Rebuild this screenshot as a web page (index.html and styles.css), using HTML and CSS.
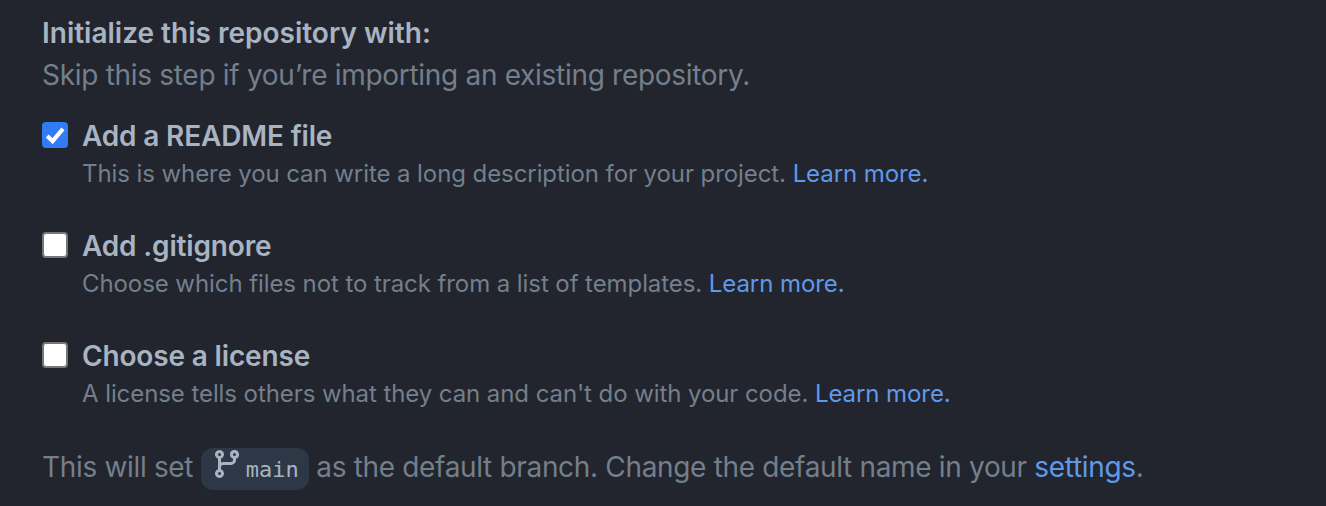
FILE: index.html
```html
<!DOCTYPE html>
<html lang="en">
<head>
<meta charset="utf-8">
<title>Initialize repository</title>
<link rel="stylesheet" href="styles.css">
</head>
<body>
<main class="panel">
  <h2 class="title">Initialize this repository with:</h2>
  <p class="hint">Skip this step if you’re importing an existing repository.</p>
  <div class="options">
    <div class="option">
      <span class="box checked">
        <svg viewBox="0 0 16 16" class="tick" aria-hidden="true"><path d="M3.2 8.6 6.5 11.8 12.9 4.2" fill="none" stroke="#fff" stroke-width="2.5"/></svg>
      </span>
      <div class="option-body">
        <div class="label">Add a README file</div>
        <div class="note">This is where you can write a long description for your project. <a href="#">Learn more.</a></div>
      </div>
    </div>
    <div class="option">
      <span class="box"></span>
      <div class="option-body">
        <div class="label">Add .gitignore</div>
        <div class="note">Choose which files not to track from a list of templates. <a href="#">Learn more.</a></div>
      </div>
    </div>
    <div class="option">
      <span class="box"></span>
      <div class="option-body">
        <div class="label">Choose a license</div>
        <div class="note">A license tells others what they can and can't do with your code. <a href="#">Learn more.</a></div>
      </div>
    </div>
  </div>
  <p class="footer">This will set <span class="branch"><svg viewBox="0 0 16 16" class="branch-icon" aria-hidden="true"><path fill="currentColor" d="M9.5 3.25a2.25 2.25 0 1 1 3 2.122V6A2.5 2.5 0 0 1 10 8.5H6a1 1 0 0 0-1 1v1.128a2.251 2.251 0 1 1-1.5 0V5.372a2.25 2.25 0 1 1 1.5 0v1.836A2.5 2.5 0 0 1 6 7h4a1 1 0 0 0 1-1v-.628A2.25 2.25 0 0 1 9.5 3.25Zm-6 0a.75.75 0 1 0 1.5 0 .75.75 0 0 0-1.5 0Zm8.25-.75a.75.75 0 1 0 0 1.5.75.75 0 0 0 0-1.5ZM4.25 12a.75.75 0 1 0 0 1.5.75.75 0 0 0 0-1.5Z"/></svg><code class="branch-name">main</code></span> as the default branch. Change the default name in your <a href="#">settings</a>.</p>
</main>
</body>
</html>
```
FILE: styles.css
```css
html, body {
  margin: 0;
  height: 506px;
  overflow: hidden;
  background: #22252d;
}
body {
  font-family: Inter, "Liberation Sans", sans-serif;
  color: #747f8c;
}
.panel {
  padding: 17px 0 0 42px;
}
.title {
  margin: 0;
  font-size: 28px;
  line-height: 32px;
  font-weight: 600;
  letter-spacing: 0;
  color: #a9b4c2;
}
.hint {
  margin: 10px 0 0;
  font-size: 28px;
  line-height: 32px;
  letter-spacing: -0.3px;
}
.options {
  margin-top: 29px;
  display: flex;
  flex-direction: column;
  gap: 40px;
}
.option {
  display: flex;
  gap: 14px;
}
.box {
  box-sizing: border-box;
  width: 26px;
  height: 26px;
  margin-top: 2px;
  flex: none;
  background: #fff;
  border: 2px solid #767676;
  border-radius: 4px;
}
.box.checked {
  background: #317bf5;
  border: 0;
  display: flex;
}
.tick {
  width: 26px;
  height: 26px;
}
.label {
  font-size: 28px;
  line-height: 32px;
  font-weight: 600;
  letter-spacing: -0.16px;
  color: #a9b4c2;
}
.note {
  margin-top: 6px;
  font-size: 24px;
  line-height: 32px;
  letter-spacing: -0.08px;
}
a {
  color: #5f99ec;
  text-decoration: none;
}
.footer {
  margin: 36px 0 0;
  font-size: 28px;
  line-height: 42px;
  letter-spacing: -0.33px;
}
.branch {
  display: inline-flex;
  align-items: flex-start;
  gap: 3px;
  height: 42px;
  margin-top: 2px;
  padding: 0 10px;
  vertical-align: top;
  border-radius: 12px;
  background: #2c3845;
  color: #a9b4c2;
}
.branch-icon {
  width: 32px;
  height: 32px;
}
.branch-name {
  font-family: "DejaVu Sans Mono", monospace;
  font-size: 22px;
  line-height: 44px;
  letter-spacing: 0;
}
```
